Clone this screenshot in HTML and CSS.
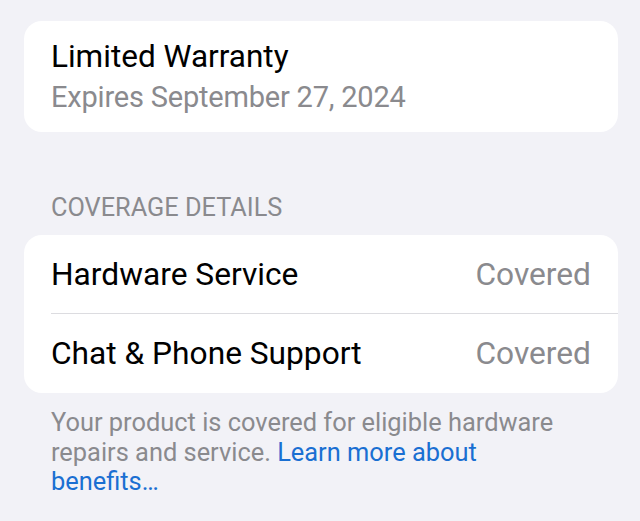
FILE: index.html
```html
<!DOCTYPE html>
<html lang="en">
<head>
    <meta charset="UTF-8">
    <meta name="viewport" content="width=device-width, initial-scale=1.0">
    <title>Limited Warranty</title>
    <link rel="stylesheet" href="styles.css">
</head>
<body>
    <div class="page">
        <div class="card warranty">
            <div class="title">Limited Warranty</div>
            <div class="subtitle">Expires September 27, 2024</div>
        </div>

        <div class="section-header">COVERAGE DETAILS</div>
        <div class="card list">
            <div class="row">
                <span class="label">Hardware Service</span>
                <span class="value">Covered</span>
            </div>
            <div class="row">
                <span class="label">Chat &amp; Phone Support</span>
                <span class="value">Covered</span>
            </div>
        </div>
        <p class="footer">Your product is covered for eligible hardware repairs and service. <a href="#">Learn more about benefits…</a></p>
    </div>
</body>
</html>
```

FILE: styles.css
```css
body {
    margin: 0;
    background-color: #f2f2f7;
    font-family: Roboto, "Noto Sans", sans-serif;
    color: #000;
}
.page {
    padding: 21px 22px 0 24px;
}
.card {
    background: #fff;
    border-radius: 18px;
}
.warranty {
    padding: 15px 27px 14px;
}
.title {
    font-size: 31.5px;
    line-height: 41px;
}
.subtitle {
    font-size: 29px;
    line-height: 41px;
    letter-spacing: -0.2px;
    color: #8a8a8e;
}
.section-header {
    margin: 61px 0 12px 27px;
    font-size: 25.3px;
    line-height: 30px;
    color: #8a8a8e;
}
.list {
    padding-left: 27px;
}
.row {
    display: flex;
    justify-content: space-between;
    align-items: center;
    height: 78px;
    padding-right: 27px;
    font-size: 31.7px;
}
.row + .row {
    height: 79px;
    border-top: 1px solid #dcdce0;
}
.value {
    color: #8a8a8e;
}
.footer {
    margin: 15px 45px 0 27px;
    font-size: 25.4px;
    line-height: 29.5px;
    color: #8a8a8e;
}
.footer a {
    color: #1a6fd2;
    text-decoration: none;
}
```
